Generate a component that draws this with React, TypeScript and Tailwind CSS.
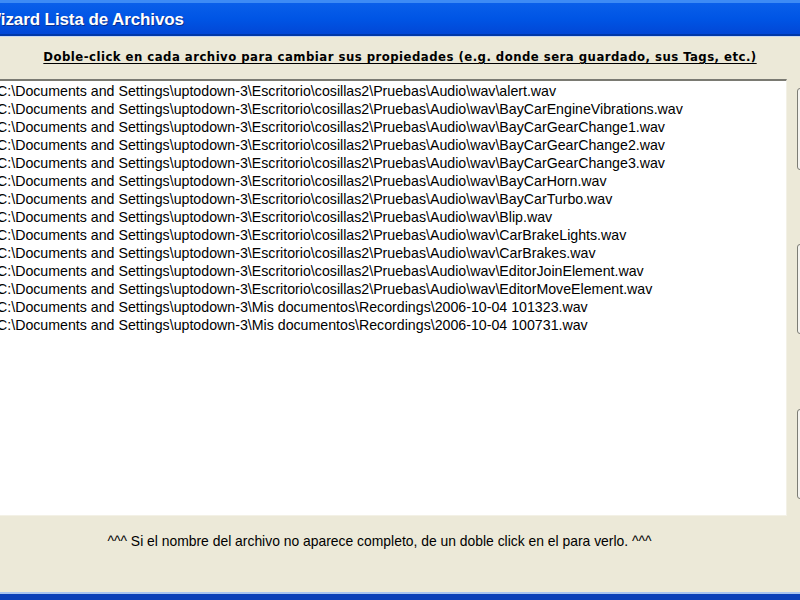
const FILES = [
  "Escritorio\\cosillas2\\Pruebas\\Audio\\wav\\alert.wav",
  "Escritorio\\cosillas2\\Pruebas\\Audio\\wav\\BayCarEngineVibrations.wav",
  "Escritorio\\cosillas2\\Pruebas\\Audio\\wav\\BayCarGearChange1.wav",
  "Escritorio\\cosillas2\\Pruebas\\Audio\\wav\\BayCarGearChange2.wav",
  "Escritorio\\cosillas2\\Pruebas\\Audio\\wav\\BayCarGearChange3.wav",
  "Escritorio\\cosillas2\\Pruebas\\Audio\\wav\\BayCarHorn.wav",
  "Escritorio\\cosillas2\\Pruebas\\Audio\\wav\\BayCarTurbo.wav",
  "Escritorio\\cosillas2\\Pruebas\\Audio\\wav\\Blip.wav",
  "Escritorio\\cosillas2\\Pruebas\\Audio\\wav\\CarBrakeLights.wav",
  "Escritorio\\cosillas2\\Pruebas\\Audio\\wav\\CarBrakes.wav",
  "Escritorio\\cosillas2\\Pruebas\\Audio\\wav\\EditorJoinElement.wav",
  "Escritorio\\cosillas2\\Pruebas\\Audio\\wav\\EditorMoveElement.wav",
  "Mis documentos\\Recordings\\2006-10-04 101323.wav",
  "Mis documentos\\Recordings\\2006-10-04 100731.wav",
];

const PREFIX = "C:\\Documents and Settings\\uptodown-3\\";

export default function App() {
  return (
    <div className="w-[800px] h-[600px] overflow-hidden flex flex-col bg-[#ECE9D8] font-['Liberation_Sans',Arial,sans-serif]">
      {/* Title bar */}
      <div className="h-[37px] shrink-0 flex flex-col">
        <div className="h-[3px] bg-[#3D8BF5]" />
        <div className="flex-1 bg-gradient-to-b from-[#0A5FEA] via-[#0055E5] to-[#0247D6] flex items-center pt-[3px]">
          <span className="ml-[-15px] text-white font-bold text-[17px] tracking-[-0.1px] [text-shadow:1px_1px_0_#0A2F8F]">
            Wizard Lista de Archivos
          </span>
        </div>
        <div className="h-[2px] bg-[#0038A8]" />
        <div className="h-[1px] bg-[#C8D8F0]" />
      </div>

      {/* Body */}
      <div className="flex-1 flex flex-col">
        <div className="h-[42px] flex items-center justify-center pb-[2px]">
          <span className="font-bold underline text-[13px] text-black underline-offset-2 tracking-[0.47px] font-['DejaVu_Sans_Condensed','DejaVu_Sans',sans-serif]">
            Doble-click en cada archivo para cambiar sus propiedades (e.g. donde sera guardado, sus Tags, etc.)
          </span>
        </div>

        <div className="flex">
          <div className="w-[789px] h-[437px] shrink-0 bg-white border-t-2 border-t-[#7A7A72] border-r border-r-[#F3F1E6] border-b border-b-[#F3F1E6] ml-[-2px] pt-[1px]">
            {FILES.map((f) => (
              <div key={f} className="h-[18px] leading-[18px] text-[14.2px] text-black whitespace-nowrap ml-[-1px]">
                {PREFIX + f}
              </div>
            ))}
          </div>
          <div className="flex-1 flex flex-col pl-[10px] pt-[9px]">
            <div className="h-[82px] w-[20px] border border-[#7D7D75] rounded-[3px] bg-[#F4F3EE]" />
            <div className="h-[90px] w-[20px] border border-[#7D7D75] rounded-[3px] bg-[#F4F3EE] mt-[74px]" />
            <div className="h-[90px] w-[20px] border border-[#7D7D75] rounded-[3px] bg-[#F4F3EE] mt-[75px]" />
          </div>
        </div>

        <div className="h-[50px] flex items-center justify-center">
          <span className="text-[13.9px] text-black mr-[41px]">
            ^^^ Si el nombre del archivo no aparece completo, de un doble click en el para verlo. ^^^
          </span>
        </div>
        <div className="flex-1" />
      </div>

      {/* Bottom border */}
      <div className="h-[2px] bg-[#A8C4F0] shrink-0" />
      <div className="h-[6px] bg-[#0A3FB8] shrink-0" />
    </div>
  );
}
